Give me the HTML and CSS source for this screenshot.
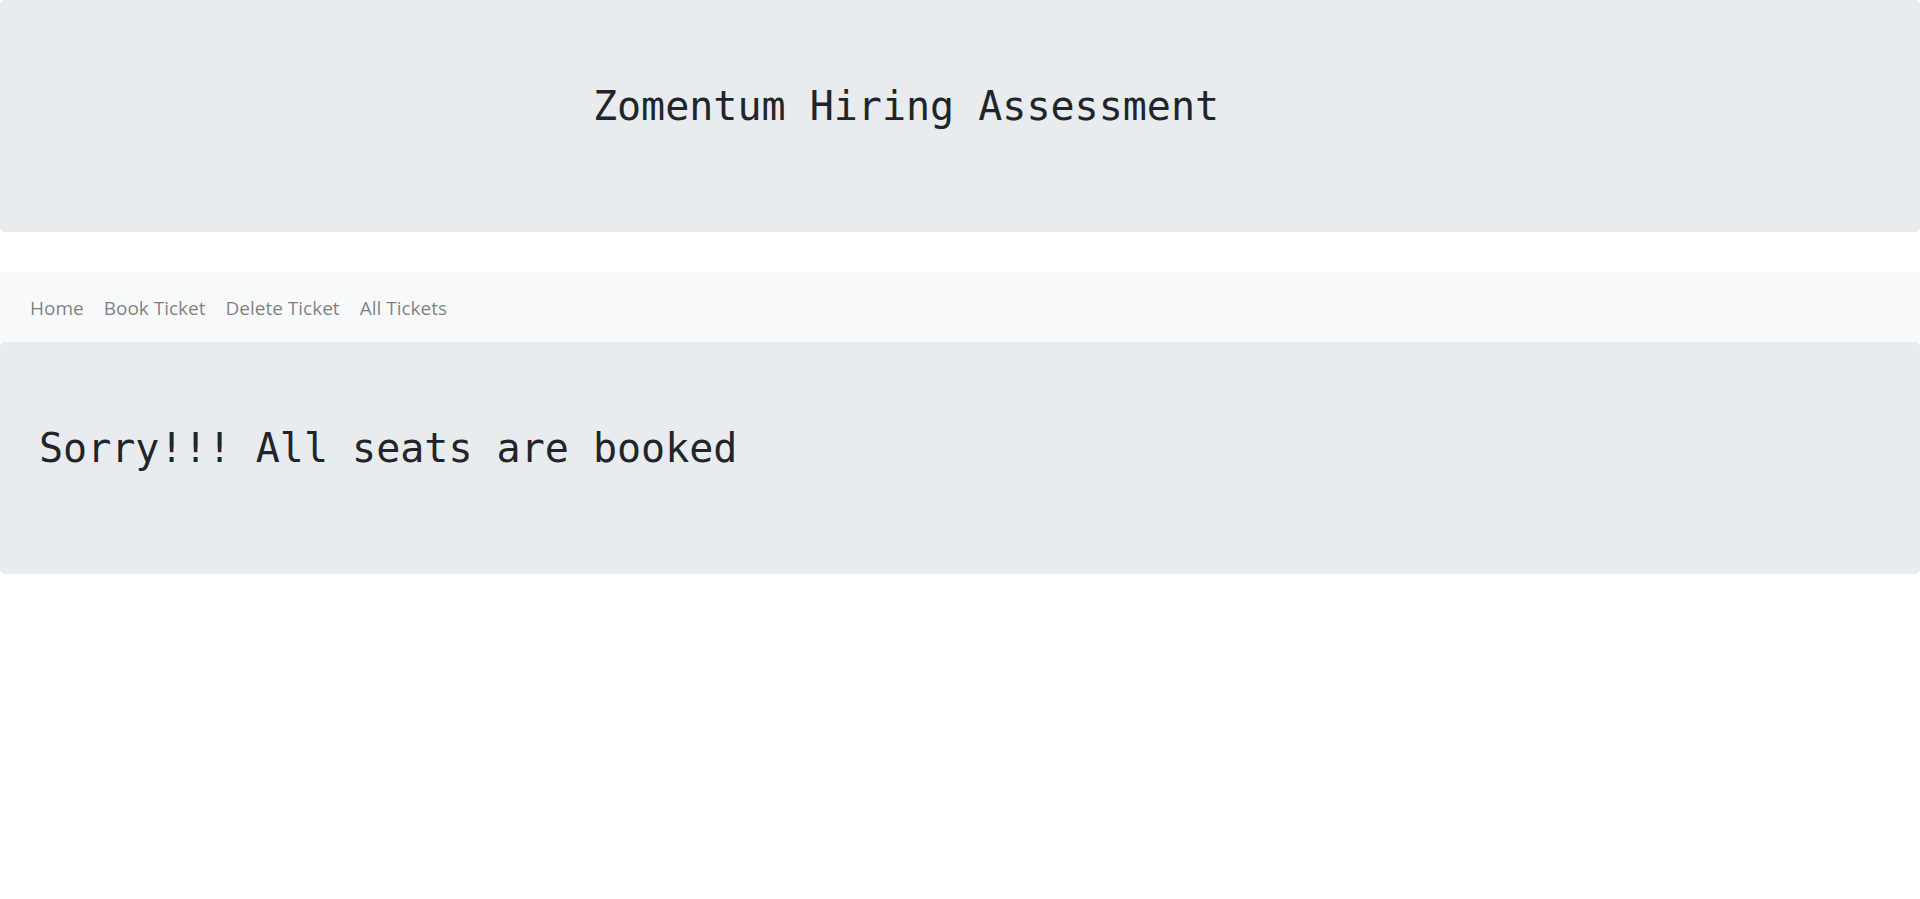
FILE: index.html
```html
<!DOCTYPE html>
<html lang="en">
<head>
<meta charset="utf-8">
<title>Zomentum Hiring Assessment</title>
<link rel="stylesheet" href="styles.css">
</head>
<body>
<header class="jumbotron jumbotron-head">
  <h1 class="title">Zomentum Hiring Assessment</h1>
</header>
<nav class="navbar">
  <a class="nav-link" href="#">Home</a>
  <a class="nav-link" href="#">Book Ticket</a>
  <a class="nav-link" href="#">Delete Ticket</a>
  <a class="nav-link" href="#">All Tickets</a>
</nav>
<main class="jumbotron jumbotron-main">
  <h1 class="message">Sorry!!! All seats are booked</h1>
</main>
</body>
</html>
```

FILE: styles.css
```css
html, body {
  margin: 0;
  padding: 0;
  background: #ffffff;
}
body {
  font-family: "Open Sans", "Noto Sans", sans-serif;
  color: #212529;
}
.jumbotron {
  background: #e9ecef;
  border-radius: 5px;
  box-sizing: border-box;
  height: 232px;
  padding-top: 82px;
}
.jumbotron-head {
  margin-bottom: 40px;
}
.title, .message {
  margin: 0;
  font-family: "DejaVu Sans Mono", monospace;
  font-size: 40px;
  font-weight: normal;
  line-height: 48px;
  color: #212529;
  white-space: pre;
}
.title {
  text-align: center;
  padding-right: 108px;
}
.message {
  padding-left: 39px;
}
.navbar {
  display: flex;
  align-items: center;
  box-sizing: border-box;
  height: 70px;
  padding-top: 2px;
  background: #f8f9fa;
  padding-left: 30px;
  gap: 20px;
}
.nav-link {
  font-size: 19px;
  color: rgba(0, 0, 0, 0.5);
  text-decoration: none;
  line-height: 28px;
}
```
